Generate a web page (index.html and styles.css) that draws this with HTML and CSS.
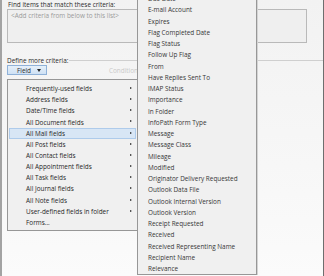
FILE: index.html
```html
<!DOCTYPE html>
<html lang="en">

<head>
    <meta charset="UTF-8">
    <title>Advanced Find</title>
    <link rel="stylesheet" href="styles.css">
</head>

<body>
    <div class="window">
        <!-- criteria tab -->
        <div class="tab">
            <p class="label">Find items that match these criteria:</p>
            <div class="criteria-list">
                <span class="hint">&lt;Add criteria from below to this list&gt;</span>
            </div>
            <div class="define">
                <span>Define more criteria:</span>
                <i class="rule"></i>
            </div>
            <div class="field-row">
                <div class="field-btn">Field <span class="caret"></span></div>
                <span class="condition">Condition</span>
            </div>
        </div>

        <!-- Field dropdown -->
        <ul class="menu fields-menu">
            <li class="sub">Frequently-used fields</li>
            <li class="sub">Address fields</li>
            <li class="sub">Date/Time fields</li>
            <li class="sub">All Document fields</li>
            <li class="sub hover">All Mail fields</li>
            <li class="sub">All Post fields</li>
            <li class="sub">All Contact fields</li>
            <li class="sub">All Appointment fields</li>
            <li class="sub">All Task fields</li>
            <li class="sub">All Journal fields</li>
            <li class="sub">All Note fields</li>
            <li class="sub">User-defined fields in folder</li>
            <li>Forms...</li>
        </ul>

        <!-- All Mail fields submenu -->
        <ul class="menu mail-menu">
            <li>Due Date</li>
            <li>E-mail Account</li>
            <li>Expires</li>
            <li>Flag Completed Date</li>
            <li>Flag Status</li>
            <li>Follow Up Flag</li>
            <li>From</li>
            <li>Have Replies Sent To</li>
            <li>IMAP Status</li>
            <li>Importance</li>
            <li>In Folder</li>
            <li>InfoPath Form Type</li>
            <li>Message</li>
            <li>Message Class</li>
            <li>Mileage</li>
            <li>Modified</li>
            <li>Originator Delivery Requested</li>
            <li>Outlook Data File</li>
            <li>Outlook Internal Version</li>
            <li>Outlook Version</li>
            <li>Receipt Requested</li>
            <li>Received</li>
            <li>Received Representing Name</li>
            <li>Recipient Name</li>
            <li>Relevance</li>
        </ul>
    </div>
</body>

</html>
```

FILE: styles.css
```css
* {
    margin: 0;
    padding: 0;
    list-style: none;
    box-sizing: border-box;
    font-family: 'Open Sans', 'Noto Sans', sans-serif;
}

body {
    width: 324px;
    height: 276px;
    overflow: hidden;
    background: #fff;
}

.window {
    width: 324px;
    height: 276px;
    position: relative;
    border-left: 2px solid #a3a3a3;
    border-right: 1px solid #6e6e6e;
    background: linear-gradient(#f2f2f2, #f7f7f7 60%, #fbfbfb);
    overflow: hidden;
}

.tab {
    padding: 1px 0 0 5px;
    font-size: 6.4px;
    color: #2b2b2b;
}

.label {
    height: 8px;
    line-height: 8px;
    padding-left: 1px;
}

.criteria-list {
    width: 300px;
    height: 34px;
    border: 1px solid #b9b9b9;
    background: #efefef;
    padding: 1px 0 0 3px;
}

.hint {
    color: #9a9a9a;
}

.define {
    margin-top: 13px;
    display: flex;
    align-items: center;
    gap: 1px;
    height: 8px;
}

.rule {
    flex: 1;
    height: 1px;
    background: #cfcfcf;
}

.field-row {
    margin-top: 1px;
    display: flex;
    align-items: center;
    height: 10px;
}

.field-btn {
    width: 40px;
    height: 10px;
    border: 1px solid #8fb1d8;
    background: linear-gradient(#e6f0fa, #cfe1f4);
    display: flex;
    align-items: center;
    padding-left: 9px;
    gap: 6px;
}

.caret {
    width: 0;
    height: 0;
    border-left: 2.5px solid transparent;
    border-right: 2.5px solid transparent;
    border-top: 3px solid #222;
}

.condition {
    margin-left: 62px;
    color: #c9c9c9;
}

/* dropdowns lie over the tab */
.menu {
    position: absolute;
    background: #f0f0f0;
    border: 1px solid #979797;
    font-size: 6.4px;
    color: #262626;
}

.menu li {
    position: relative;
    display: flex;
    align-items: center;
}

.fields-menu {
    top: 79px;
    left: 5px;
    width: 131px;
    padding: 3px 1px 2px;
}

.fields-menu li {
    height: 11.17px;
    padding-left: 17px;
}

.fields-menu .hover {
    background: #d8e6f5;
    outline: 1px solid #aecbeb;
    outline-offset: -1px;
}

.sub::after {
    content: '';
    position: absolute;
    right: 4px;
    top: 4px;
    border-top: 1.5px solid transparent;
    border-bottom: 1.5px solid transparent;
    border-left: 2px solid #222;
}

.mail-menu {
    top: -8px;
    left: 135px;
    width: 120px;
    padding: 0 1px;
    box-shadow: 1px 0 0 #d4d4d4;
}

.mail-menu li {
    height: 11.25px;
    padding-left: 9px;
    color: #363636;
}
```
